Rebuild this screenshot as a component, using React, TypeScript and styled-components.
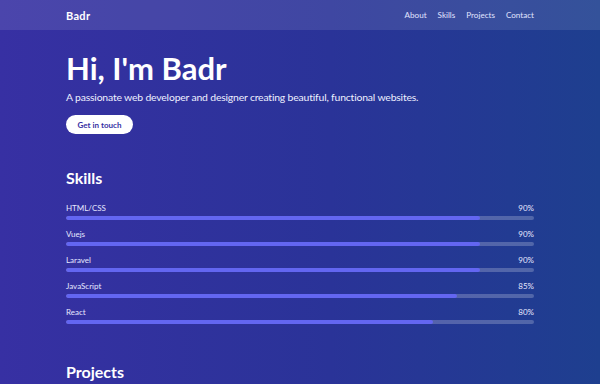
import * as React from 'react'
import styled, { createGlobalStyle } from 'styled-components'

const Global = createGlobalStyle`
  html, body {
    margin: 0;
    padding: 0;
  }
  body {
    font-family: Lato, 'Noto Sans', sans-serif;
    color: #fff;
    background: #312e91;
  }
`

const Page = styled.div`
  width: 600px;
  height: 384px;
  overflow: hidden;
  background: linear-gradient(90deg, #3730a3 0%, #2a3398 55%, #1e3f8f 100%);
`

const Header = styled.header`
  height: 30px;
  padding: 0 66px;
  display: flex;
  align-items: center;
  justify-content: space-between;
  background: rgba(255, 255, 255, 0.1);
`

const Logo = styled.div`
  font-size: 11px;
  font-weight: 700;
  letter-spacing: 0.3px;
`

const Nav = styled.nav`
  display: flex;
  gap: 11px;
`

const NavLink = styled.a`
  font-size: 8.1px;
  color: #e0e4ff;
  text-decoration: none;
`

const Main = styled.main`
  padding: 0 66px;
`

const Hero = styled.section`
  padding-top: 18px;
`

const Title = styled.h1`
  margin: 0;
  font-size: 31px;
  line-height: 40px;
  font-weight: 700;
`

const Subtitle = styled.p`
  margin: 1px 0 0;
  font-size: 10.4px;
  line-height: 16px;
  letter-spacing: -0.17px;
  color: #eef0ff;
`

const Button = styled.button`
  margin-top: 10px;
  height: 19px;
  width: 67px;
  padding: 0;
  border: none;
  border-radius: 10px;
  background: #fff;
  color: #3730a3;
  font-family: inherit;
  font-size: 8px;
  font-weight: 700;
`

const Section = styled.section<{ $top: number }>`
  padding-top: ${p => p.$top}px;
`

const SectionTitle = styled.h2`
  margin: 0;
  font-size: 16px;
  line-height: 20px;
  font-weight: 700;
`

const SkillList = styled.div`
  margin-top: 15px;
  display: flex;
  flex-direction: column;
  gap: 9px;
`

const Skill = styled.div`
  display: flex;
  flex-direction: column;
  gap: 3px;
`

const SkillHead = styled.div`
  display: flex;
  justify-content: space-between;
  font-size: 8px;
  line-height: 10px;
  color: #e6e8ff;
`

const Track = styled.div`
  height: 4px;
  border-radius: 2px;
  background: rgba(255, 255, 255, 0.22);
  overflow: hidden;
`

const Fill = styled.div`
  height: 100%;
  border-radius: 2px;
  background: #6366f1;
`

const skills = [
  { name: 'HTML/CSS', level: 90 },
  { name: 'Vuejs', level: 90 },
  { name: 'Laravel', level: 90 },
  { name: 'JavaScript', level: 85 },
  { name: 'React', level: 80 },
]

export default function App() {
  return (
    <Page>
      <Global />
      <Header>
        <Logo>Badr</Logo>
        <Nav>
          <NavLink href="#about">About</NavLink>
          <NavLink href="#skills">Skills</NavLink>
          <NavLink href="#projects">Projects</NavLink>
          <NavLink href="#contact">Contact</NavLink>
        </Nav>
      </Header>
      <Main>
        <Hero>
          <Title>Hi, I'm Badr</Title>
          <Subtitle>
            A passionate web developer and designer creating beautiful, functional websites.
          </Subtitle>
          <Button>Get in touch</Button>
        </Hero>
        <Section $top={34}>
          <SectionTitle>Skills</SectionTitle>
          <SkillList>
            {skills.map(s => (
              <Skill key={s.name}>
                <SkillHead>
                  <span>{s.name}</span>
                  <span>{s.level}%</span>
                </SkillHead>
                <Track>
                  <Fill style={{ width: `calc(${s.level}% - 7px)` }} />
                </Track>
              </Skill>
            ))}
          </SkillList>
        </Section>
        <Section $top={38}>
          <SectionTitle>Projects</SectionTitle>
        </Section>
      </Main>
    </Page>
  )
}
